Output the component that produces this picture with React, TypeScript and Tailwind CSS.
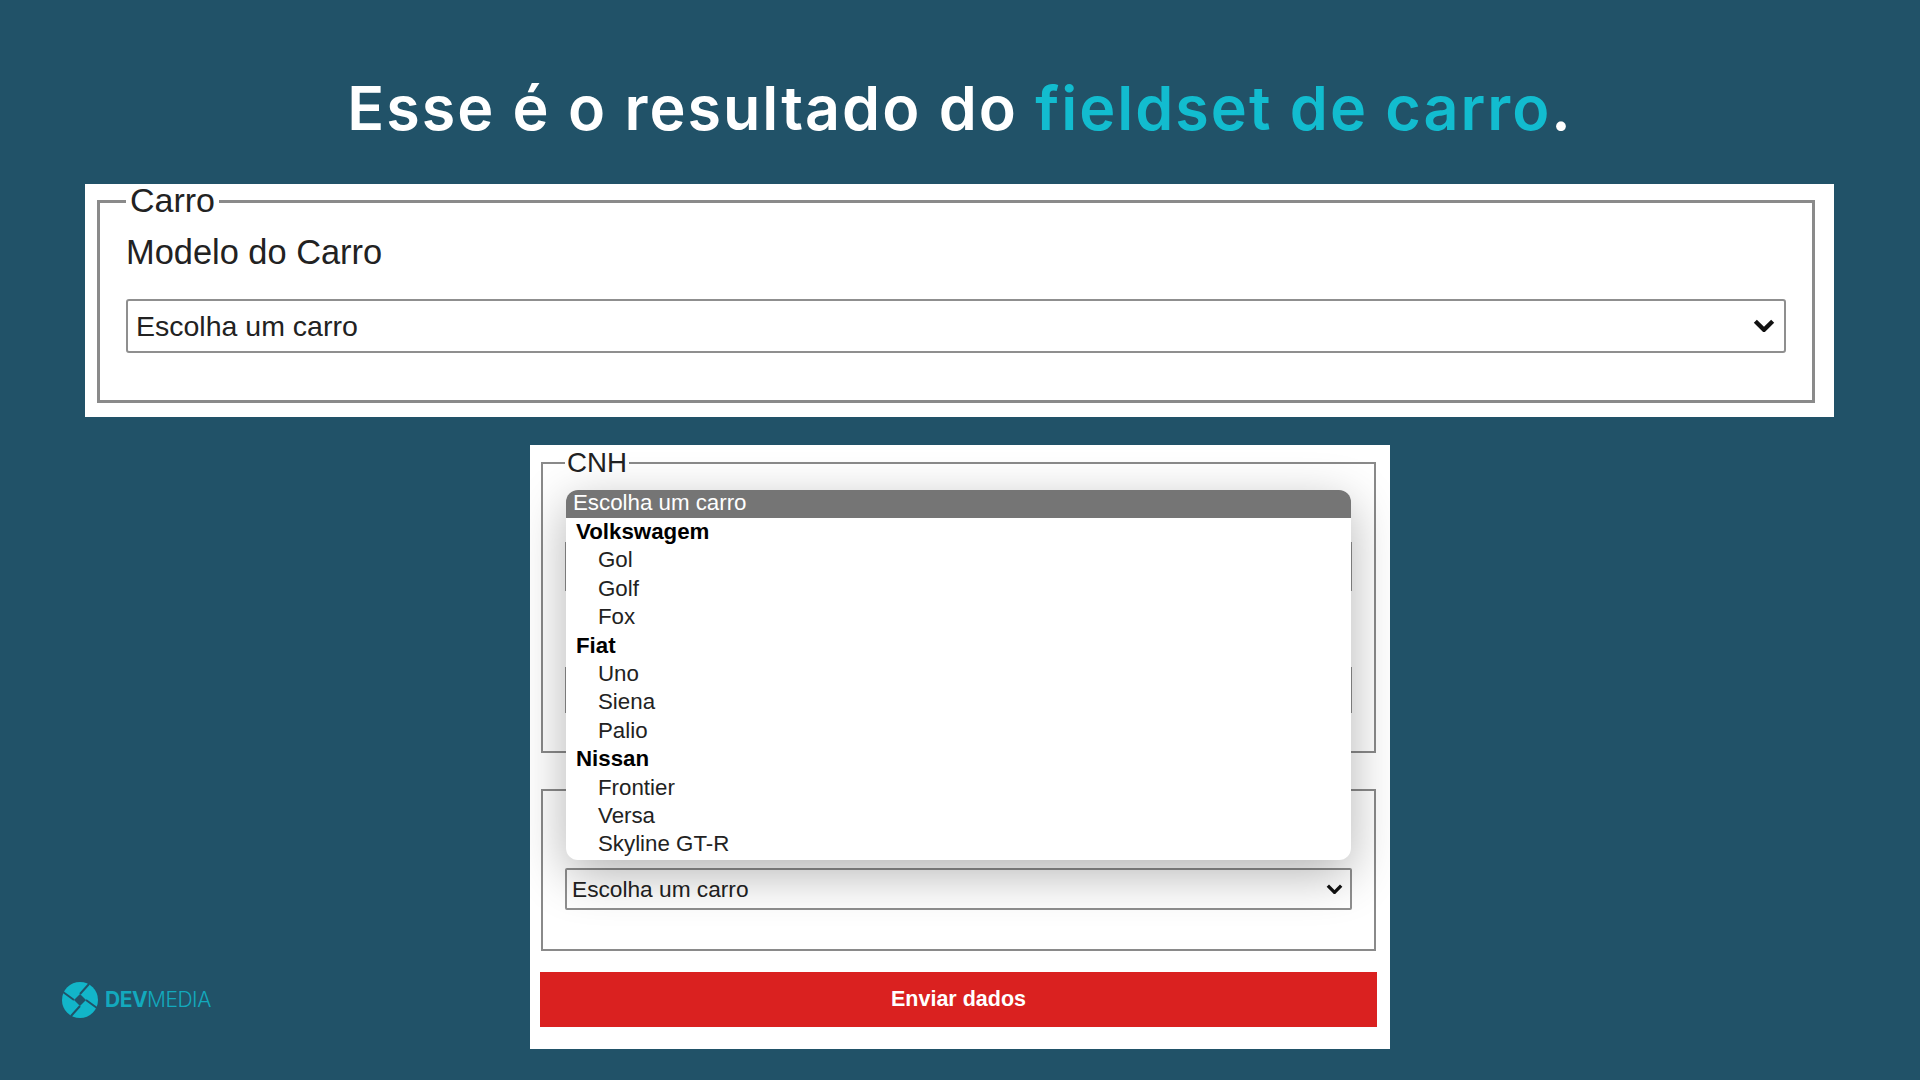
const groups = [
  { label: "Volkswagem", options: ["Gol", "Golf", "Fox"] },
  { label: "Fiat", options: ["Uno", "Siena", "Palio"] },
  { label: "Nissan", options: ["Frontier", "Versa", "Skyline GT-R"] },
];

function Chevron({ className }: { className: string }) {
  return (
    <svg viewBox="0 0 20 12" fill="none" className={className}>
      <path d="M2 2l8 8 8-8" stroke="#111" strokeWidth="4" strokeLinejoin="miter" />
    </svg>
  );
}

function DevmediaLogo() {
  return (
    <div className="flex items-center gap-[7px]">
      <svg viewBox="0 0 36 36" className="h-[36px] w-[36px]">
        <circle cx="18" cy="18" r="18" fill="#12b5c9" />
        <path d="M18 12l6 6-6 6-6-6z" fill="#215268" />
        <path
          d="M18 12L27 2M24 18L35 26M18 24L9 34M12 18L1 10"
          stroke="#215268"
          strokeWidth="2"
        />
      </svg>
      <span className="font-['Inter',sans-serif] text-[21px] tracking-[-0.5px] text-[#13a9bd]">
        <span className="font-bold">DEV</span>
        <span className="font-light">MEDIA</span>
      </span>
    </div>
  );
}

export default function App() {
  return (
    <main className="flex h-[1080px] w-[1920px] flex-col overflow-hidden bg-[#215268] font-['Liberation_Sans',Arial,sans-serif] text-[#222]">
      <h1 className="mt-[70px] h-[78px] text-center font-['Inter',sans-serif] text-[61px] leading-[76px] font-semibold tracking-[2px] text-white">
        Esse é o resultado do <span className="text-[#12bccf]">fieldset de carro</span>.
      </h1>

      <section className="mt-[36px] ml-[85px] h-[233px] w-[1749px] bg-white pr-[19px] pl-[12px]">
        <fieldset className="h-[219px] border-[3px] border-[#8a8a8a] px-[26px]">
          <legend className="px-[4px] pb-[2px] text-[34px] leading-[32px]">Carro</legend>
          <label className="mt-[14px] block text-[34.4px] leading-[40px]">Modelo do Carro</label>
          <div className="relative mt-[27px]">
            <select
              defaultValue=""
              className="block h-[54px] w-full appearance-none rounded-[3px] border-2 border-[#8f8f8f] bg-white pl-[8px] text-[28.5px]"
            >
              <option value="">Escolha um carro</option>
            </select>
            <Chevron className="absolute top-[20px] right-[11px] h-[13px] w-[22px]" />
          </div>
        </fieldset>
      </section>

      <div className="mt-[28px] grid h-[604px] grid-cols-[530px_860px]">
        <div className="flex items-end pb-[31px] pl-[62px]">
          <DevmediaLogo />
        </div>

        <section className="relative overflow-hidden bg-white px-[11px] pt-[4px]">
          <fieldset className="h-[304px] w-[835px] border-2 border-[#8a8a8a] px-[22px]">
            <legend className="px-[2px] text-[27.7px] leading-[28px]">CNH</legend>
            <div className="mt-[65px] h-[49px] border-x-2 border-[#8f8f8f]" />
            <div className="mt-[76px] h-[46px] border-x-2 border-[#8f8f8f]" />
          </fieldset>

          <fieldset className="mt-[36px] h-[162px] w-[835px] border-2 border-[#8a8a8a] px-[22px] pt-[77px]">
            <div className="relative">
              <select
                defaultValue=""
                className="block h-[42px] w-full appearance-none rounded-[2px] border-2 border-[#8f8f8f] bg-[#fff] pl-[5px] text-[22.7px]"
              >
                <option value="">Escolha um carro</option>
              </select>
              <Chevron className="absolute top-[16px] right-[9px] h-[10px] w-[17px]" />
            </div>
          </fieldset>

          <button className="mt-[21px] -ml-px block h-[55px] w-[837px] bg-[#da2120] text-[21.5px] font-bold text-white">
            Enviar dados
          </button>

          <div className="absolute top-[45px] left-[36px] h-[370px] w-[785px] overflow-hidden rounded-[12px] bg-white text-[22.3px] leading-[28.4px] shadow-[0_14px_50px_rgba(0,0,0,0.3)]">
            <div className="h-[28px] bg-[#757575] pl-[7px] leading-[26px] text-white">Escolha um carro</div>
            {groups.map((group) => (
              <div key={group.label}>
                <div className="pl-[10px] font-bold text-black">{group.label}</div>
                {group.options.map((option) => (
                  <div key={option} className="pl-[32px]">
                    {option}
                  </div>
                ))}
              </div>
            ))}
          </div>
        </section>
      </div>
    </main>
  );
}
